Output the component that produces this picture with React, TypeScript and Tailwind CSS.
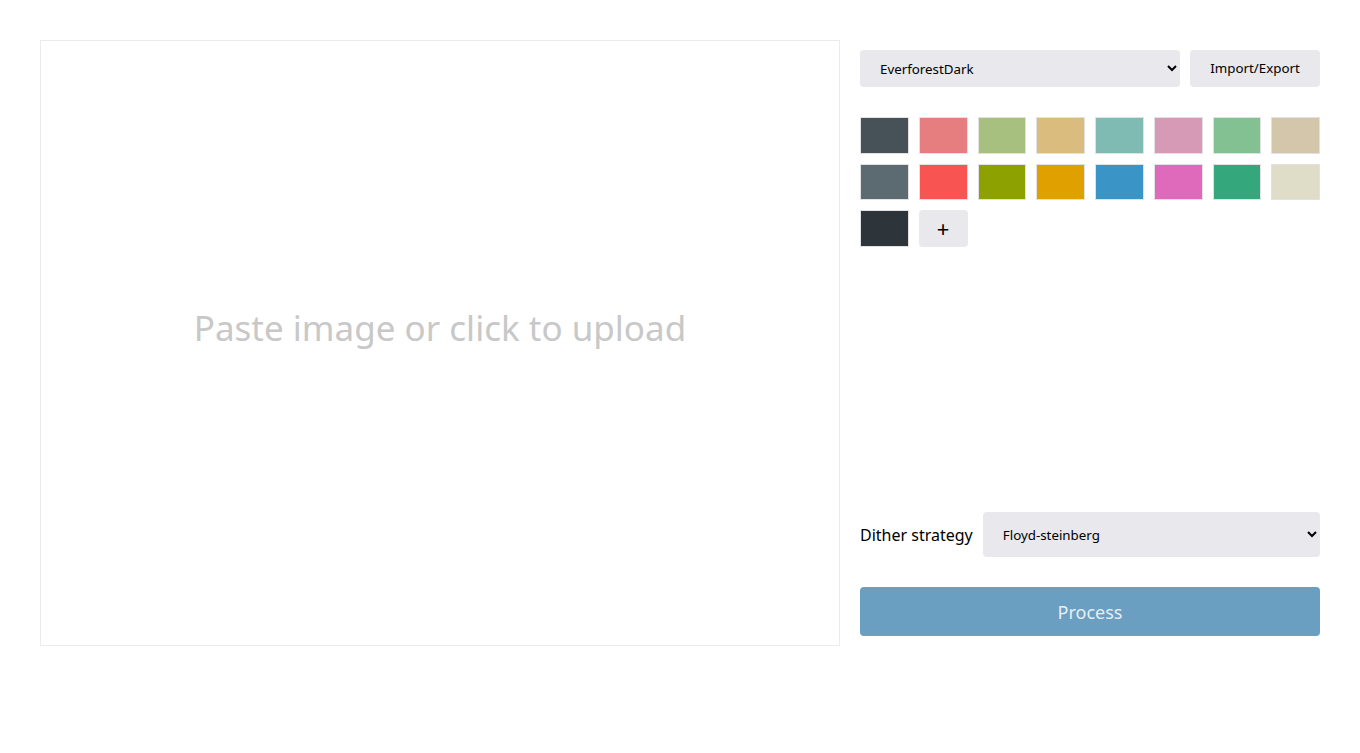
import React from "react";

const palette = [
  "#475258", "#e67e80", "#a7c080", "#dbbc7f", "#7fbbb3", "#d699b6", "#83c092", "#d3c6aa",
  "#5c6a72", "#f85552", "#8da101", "#dfa000", "#3a94c5", "#df69ba", "#35a77c", "#dfddc8",
  "#2d353b",
];

const App = () => {
  return (
    <div className="min-h-screen bg-white p-10 font-['Noto_Sans',sans-serif] text-black">
      <div className="flex gap-5">
        {/* Image drop area */}
        <div className="flex h-[606px] w-[800px] shrink-0 cursor-pointer items-center justify-center border border-[#ebebeb] pb-[30px]">
          <span className="text-[35px] text-[#c8c8c8]">Paste image or click to upload</span>
        </div>

        {/* Controls */}
        <div className="flex h-[606px] w-[460px] flex-col py-[10px]">
          <div className="flex gap-[10px]">
            <select className="h-[37px] flex-1 rounded bg-[#e8e8ed] px-4 text-[13.33px] outline-none">
              <option>EverforestDark</option>
            </select>
            <button className="h-[37px] w-[130px] rounded bg-[#e8e8ed] text-[13.33px]">Import/Export</button>
          </div>

          <div className="mt-[30px] grid grid-cols-8 gap-[10px]">
            {palette.map((c) => (
              <div key={c} className="aspect-[4/3] border border-[#e2e2e2]" style={{ backgroundColor: c }} />
            ))}
            <button className="flex aspect-[4/3] items-center justify-center rounded-sm bg-[#e8e8ed] text-[22px] leading-none text-black">
              +
            </button>
          </div>

          <div className="flex-1" />

          <div className="flex items-center gap-[10px]">
            <span className="text-base">Dither strategy</span>
            <select className="h-[45px] flex-1 rounded bg-[#e8e8ed] px-4 text-[13.33px] outline-none">
              <option>Floyd-steinberg</option>
            </select>
          </div>

          <button className="mt-[30px] h-[49px] w-full rounded bg-[#6a9fc2] text-lg text-[#e6eef5]">
            Process
          </button>
        </div>
      </div>
    </div>
  );
};

export default App;
